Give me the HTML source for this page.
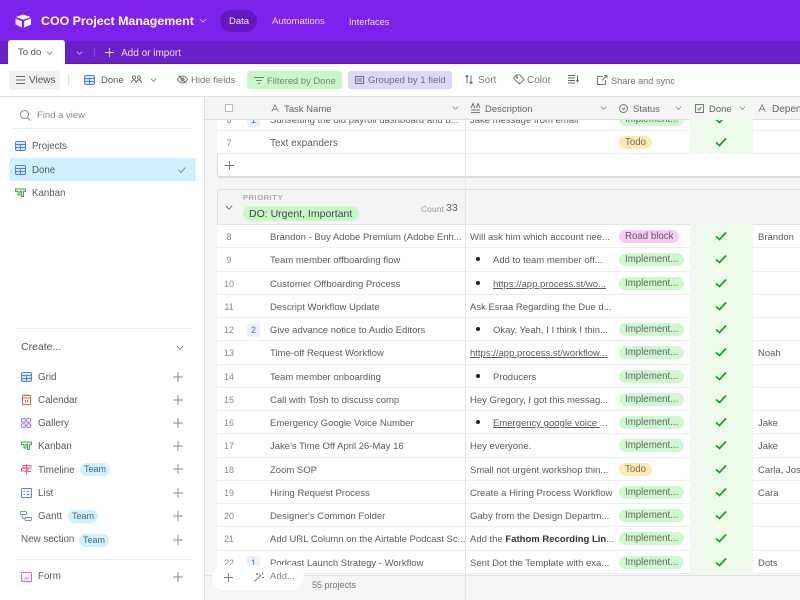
<!DOCTYPE html>
<html><head><meta charset="utf-8"><title>COO Project Management</title>
<style>
*{box-sizing:border-box}
html,body{margin:0;padding:0}
body{width:800px;height:600px;overflow:hidden;position:relative;background:#fff;font-family:"Liberation Sans",sans-serif;font-size:9.5px;color:#555;filter:blur(.3px)}
.a,.t,svg.i{position:absolute}
.t{white-space:nowrap;line-height:14px}
svg.i{fill:none;stroke:currentColor;stroke-width:1;overflow:visible}
.r{position:absolute;left:217px;width:583px;height:23.25px;background:#fff;border-bottom:1px solid #eeeeee;z-index:1}
.r>*{position:absolute}
.n{left:0;width:24px;text-align:center;top:6px;font-size:9px;color:#8a8a8a;line-height:13px}
.b{left:30px;top:5px;width:13px;height:14px;border-radius:3px;background:#ecf0fb;color:#3f6fd8;font-size:9px;text-align:center;line-height:14px}
.m{left:53px;top:6px;line-height:14px;white-space:nowrap;color:#5c5c5c}
.d{left:253px;top:6px;line-height:14px;white-space:nowrap;color:#5c5c5c}
.u{left:276px;top:6px;line-height:14px;white-space:nowrap;color:#5c5c5c}
.l{text-decoration:underline}
.o{left:259px;top:9px;width:4px;height:4px;border-radius:50%;background:#222}
.s{left:402px;top:5px;height:13px;line-height:13px;border-radius:7px;padding:0 6px;white-space:nowrap;background:#d0f8cf;color:#666;font-size:9.700px}
.s.y{background:#ffeab6;color:#7a6a50}
.s.p{background:#f9ccf3;color:#6e4f6e}
.c{left:473px;top:-1px;width:63px;height:24.250px;background:#edfbeb}
.c svg{position:absolute;left:25px;top:7px;width:12px;height:10px;fill:none;stroke:#14a01e;stroke-width:1.7}
.e{left:541px;top:6px;line-height:14px;white-space:nowrap;color:#5c5c5c}
.h{position:absolute;top:98px;height:23px;line-height:23px;color:#666;z-index:3;white-space:nowrap}
.pl{position:absolute;left:173px;width:10px;height:10px;color:#8a8a8a}
.si{position:absolute;left:38px;color:#5a5a5a;line-height:14px;white-space:nowrap;font-size:9.800px}
.tm{position:absolute;height:13px;line-height:13px;width:30px;text-align:center;border-radius:7px;background:#d0f0fd;color:#3b6d94;font-size:9px}
</style></head>
<body>
<svg width="0" height="0" style="position:absolute"><defs>
<symbol id="dn" viewBox="0 0 10 6"><path d="M1 1l4 4 4-4" fill="none" stroke="currentColor" stroke-width="1"/></symbol>
<symbol id="pl" viewBox="0 0 10 10"><path d="M5 0v10M0 5h10" fill="none" stroke="currentColor" stroke-width="1"/></symbol>
<symbol id="gr" viewBox="0 0 11 10"><rect x=".5" y=".5" width="10" height="9" rx="1.500" fill="#d8e6fb" stroke="#4c83dc"/><path d="M.5 3.500h10M.5 6.500h10M5.500 3.500v6" stroke="#4c83dc" stroke-width="1" fill="none"/></symbol>
<symbol id="kb" viewBox="0 0 11 10"><path d="M.5 1h10v2.500H8.500V8.500H6.500V3.500H5V7H3V3.500H.5z" fill="#e2f6e0" stroke="#3fae52" stroke-width="1"/></symbol>
<symbol id="aa" viewBox="0 0 10 10"><path d="M1 9.500L5 1l4 8.500M2.500 6.500h5" fill="none" stroke="currentColor" stroke-width="1"/></symbol>
</defs></svg>

<!-- top bar -->
<div class="a" style="left:0;top:0;width:800px;height:41px;background:#7c22ec"></div>
<div class="a" style="left:0;top:41px;width:800px;height:23px;background:#6a1fc9;border-bottom:1px solid #5b16b5"></div>
<svg class="a" style="left:15px;top:14px" width="17" height="14" viewBox="0 0 17 14"><path d="M8 .5L1 3l7 2.800L15.500 3z" fill="#fff"/><path d="M9 7v6.500l7-2.700V4.200z" fill="#fff"/><path d="M.5 4.500v6L7 13.500V7.200z" fill="#fff" opacity=".85"/></svg>
<div class="t" style="left:41px;top:14px;font-size:12.400px;font-weight:700;color:#fff">COO Project Management</div>
<svg class="a" style="left:199px;top:18px;color:#e8d8ff" width="8" height="5"><use href="#dn"/></svg>
<div class="a" style="left:220px;top:10px;width:37px;height:22px;border-radius:11px;background:#6418bd"></div>
<div class="t" style="left:229px;top:15px;color:#f3eaff">Data</div>
<div class="t" style="left:272px;top:15px;color:#ecdcff">Automations</div>
<div class="t" style="left:349px;top:15px;color:#ecdcff;font-size:9.200px">Interfaces</div>
<div class="a" style="left:8px;top:40px;width:57px;height:25px;background:#fff;border-radius:3px 3px 0 0"></div>
<div class="t" style="left:18px;top:46px;color:#555">To do</div>
<svg class="a" style="left:46px;top:51px;color:#666" width="7" height="4"><use href="#dn"/></svg>
<svg class="a" style="left:76px;top:51px;color:#e2d0ff" width="7" height="4"><use href="#dn"/></svg>
<div class="a" style="left:94px;top:48px;width:1px;height:9px;background:#8548d6"></div>
<svg class="a" style="left:105px;top:48px;color:#ecdcff" width="9" height="9"><use href="#pl"/></svg>
<div class="t" style="left:121px;top:47px;color:#ecdcff;font-size:10px">Add or import</div>

<!-- toolbar -->
<div class="a" style="left:0;top:65px;width:800px;height:32px;background:#fff;border-bottom:1px solid #dcdcdc"></div>
<div class="a" style="left:9px;top:71px;width:51px;height:19px;background:#f1f1f1;border-radius:2px"></div>
<svg class="i" style="left:16px;top:76px;color:#666" width="9" height="8"><path d="M0 .5h9M0 4h9M0 7.500h9"/></svg>
<div class="t" style="left:29px;top:74px;color:#555;font-size:10px">Views</div>
<div class="a" style="left:68px;top:74px;width:1px;height:12px;background:#e2e2e2"></div>
<svg class="a" style="left:84px;top:75px" width="11" height="10"><use href="#gr"/></svg>
<div class="t" style="left:101px;top:74px;color:#555">Done</div>
<svg class="i" style="left:131px;top:75px;color:#777" width="11" height="9"><circle cx="3" cy="2.500" r="1.500"/><circle cx="8" cy="2.500" r="1.500"/><path d="M.5 8c0-2 1-3 2.500-3s2 1 2 3M5.500 8c0-2 1-3 2.500-3s2.500 1 2.500 3"/></svg>
<svg class="a" style="left:150px;top:78px;color:#666" width="7" height="4"><use href="#dn"/></svg>
<svg class="i" style="left:177px;top:75px;color:#777" width="11" height="9"><path d="M.5 4.500C2 2 4 1 5.500 1s3.500 1 5 3.500C9 7 7 8 5.500 8S2 7 .5 4.500z"/><circle cx="5.500" cy="4.500" r="1.500"/><path d="M1.500.5l8 8"/></svg>
<div class="t" style="left:191px;top:74px;color:#777">Hide fields</div>
<div class="a" style="left:247px;top:71px;width:95px;height:18px;background:#c9f7c6;border-radius:3px"></div>
<svg class="i" style="left:254px;top:77px;color:#6d8c6a" width="10" height="7"><path d="M0 .5h10M2 3.500h6M4 6.500h2"/></svg>
<div class="t" style="left:267px;top:74px;color:#6f8a6d;font-size:9.400px">Filtered by Done</div>
<div class="a" style="left:348px;top:71px;width:104px;height:18px;background:#dcd6fb;border-radius:3px"></div>
<svg class="i" style="left:355px;top:76px;color:#6d6a85" width="9" height="8"><rect x=".5" y=".5" width="8" height="7"/><path d="M2 3h5M2 5h5"/></svg>
<div class="t" style="left:368px;top:74px;color:#6d6a85">Grouped by 1 field</div>
<svg class="i" style="left:465px;top:75px;color:#666" width="8" height="9"><path d="M2 8.500V.5M.5 2L2 .5 3.500 2M6 .5v8M4.500 7L6 8.500 7.500 7"/></svg>
<div class="t" style="left:478px;top:74px;color:#777;font-size:10px">Sort</div>
<svg class="i" style="left:513px;top:74px;color:#777" width="12" height="11"><path d="M1 3.500L3.500 1H7l4 4.500-4.500 4.500L1 5z"/><circle cx="4" cy="3.500" r=".7"/></svg>
<div class="t" style="left:527px;top:74px;color:#777;font-size:10px">Color</div>
<svg class="i" style="left:568px;top:75px;color:#666" width="11" height="9"><path d="M0 .5h7M0 3h7M0 5.500h7M0 8h7M9.500 .5v5M8.500 5l1 2 1-2"/></svg>
<svg class="i" style="left:597px;top:75px;color:#777" width="11" height="10"><path d="M6 1.500H.5v8h8V5M5 5.500L10 .5M7 .5h3v3"/></svg>
<div class="t" style="left:611px;top:74px;color:#777;font-size:9.200px">Share and sync</div>

<!-- sidebar -->
<div class="a" style="left:0;top:97px;width:205px;height:503px;background:#fff"></div>
<div class="a" style="left:204px;top:97px;width:1px;height:503px;background:#dddddd"></div>
<svg class="i" style="left:20px;top:110px;color:#888" width="11" height="11"><circle cx="4.500" cy="4.500" r="4"/><path d="M7.500 7.500l3 3"/></svg>
<div class="t" style="left:37px;top:109px;color:#8a8a8a">Find a view</div>
<div class="a" style="left:12px;top:128px;width:180px;height:1px;background:#eeeeee"></div>
<svg class="a" style="left:15px;top:141px" width="11" height="10"><use href="#gr"/></svg>
<div class="t" style="left:32px;top:140px;color:#5a5a5a;font-size:9.700px">Projects</div>
<div class="a" style="left:9px;top:158px;width:187px;height:23px;background:#d1f0ff;border-radius:3px 0 0 3px"></div>
<svg class="a" style="left:15px;top:165px" width="11" height="10"><use href="#gr"/></svg>
<div class="t" style="left:32px;top:164px;color:#4a5a66;font-size:9.700px">Done</div>
<svg class="i" style="left:178px;top:167px;color:#7f8d96" width="8" height="6"><path d="M.5 3l2.500 2.500L7.500.5"/></svg>
<svg class="a" style="left:15px;top:188px" width="11" height="10"><use href="#kb"/></svg>
<div class="t" style="left:32px;top:187px;color:#5a5a5a;font-size:9.700px">Kanban</div>

<div class="a" style="left:16px;top:328px;width:176px;height:1px;background:#eeeeee"></div>
<div class="t" style="left:21px;top:340px;font-size:10.500px;color:#555">Create...</div>
<svg class="a" style="left:176px;top:345px;color:#777" width="8" height="5"><use href="#dn"/></svg>

<svg class="a" style="left:21px;top:372px" width="11" height="10"><use href="#gr"/></svg>
<div class="si" style="top:371px">Grid</div>
<svg class="pl" style="top:372px"><use href="#pl"/></svg>
<svg class="i" style="left:22px;top:394px;color:#d4694f" width="9" height="11"><rect x=".5" y="1.500" width="8" height="9"/><path d="M.5 4h8M3 0v2M6 0v2M3.500 6v2.500M5.500 6v2.500"/></svg>
<div class="si" style="top:394px">Calendar</div>
<svg class="pl" style="top:395px"><use href="#pl"/></svg>
<svg class="i" style="left:21px;top:418px;color:#a26ff0" width="10" height="10"><rect x=".5" y=".5" width="3.800" height="3.800" rx="1.200"/><rect x="5.700" y=".5" width="3.800" height="3.800" rx="1.200"/><rect x=".5" y="5.700" width="3.800" height="3.800" rx="1.200"/><rect x="5.700" y="5.700" width="3.800" height="3.800" rx="1.200"/></svg>
<div class="si" style="top:417px">Gallery</div>
<svg class="pl" style="top:418px"><use href="#pl"/></svg>
<svg class="a" style="left:21px;top:441px" width="11" height="10"><use href="#kb"/></svg>
<div class="si" style="top:440px">Kanban</div>
<svg class="pl" style="top:441px"><use href="#pl"/></svg>
<svg class="i" style="left:21px;top:464px;color:#e8668e" width="11" height="11"><path d="M5.500 0v11M2 1.500h8v2.500H2zM.5 4.500H7V7H.5zM4 7.500h6"/></svg>
<div class="si" style="top:464px">Timeline</div>
<div class="tm" style="left:80px;top:463px">Team</div>
<svg class="pl" style="top:464px"><use href="#pl"/></svg>
<svg class="i" style="left:21px;top:488px;color:#6a7bc8" width="11" height="10"><rect x=".5" y=".5" width="10" height="9" rx="1"/><path d="M2.500 3.200h1.500M2.500 6.500h1.500M5.500 3.200h3M5.500 6.500h3"/></svg>
<div class="si" style="top:487px">List</div>
<svg class="pl" style="top:488px"><use href="#pl"/></svg>
<svg class="i" style="left:20px;top:511px;color:#6f9a9f" width="12" height="10"><rect x=".5" y=".5" width="6" height="3" rx="1"/><rect x="5" y="6.500" width="6.500" height="3" rx="1"/><path d="M2 3.500c0 3 1 4.500 3 4.500"/></svg>
<div class="si" style="top:510px">Gantt</div>
<div class="tm" style="left:68px;top:510px">Team</div>
<svg class="pl" style="top:511px"><use href="#pl"/></svg>
<div class="t" style="left:21px;top:533px;color:#5a5a5a;font-size:9.800px">New section</div>
<div class="tm" style="left:79px;top:534px">Team</div>
<svg class="pl" style="top:535px"><use href="#pl"/></svg>
<div class="a" style="left:16px;top:559px;width:176px;height:1px;background:#eeeeee"></div>
<svg class="i" style="left:21px;top:572px;color:#e062c8" width="11" height="10"><rect x=".5" y=".5" width="10" height="9" rx="1"/><path d="M2.500 7.500L4.500 4.500l1.500 1.500 1-1 1.500 2.500z" fill="#f4a8e6" stroke="none"/></svg>
<div class="si" style="top:570px">Form</div>
<svg class="pl" style="top:572px"><use href="#pl"/></svg>

<!-- grid -->
<div class="a" style="left:205px;top:97px;width:595px;height:503px;background:#f5f4f6"></div>

<!-- grid header -->
<div class="a" style="left:205px;top:97px;width:595px;height:23px;background:#f5f4f5;border-bottom:1px solid #dcdcdc;z-index:3"></div>
<div class="a" style="left:225px;top:104px;width:8px;height:8px;border:1px solid #bbb;background:#fff;z-index:4"></div>
<svg class="a" style="left:271px;top:104px;color:#777;z-index:4" width="8" height="8"><use href="#aa"/></svg>
<div class="h" style="left:284px">Task Name</div>
<svg class="a" style="left:452px;top:106px;color:#777;z-index:4" width="7" height="4"><use href="#dn"/></svg>
<svg class="i" style="left:471px;top:103px;color:#777;z-index:4" width="9" height="10"><path d="M0 5L2 .5 4 5M5.500 5l1.500-4.500L9 5M0 7h9M0 9.500h9"/></svg>
<div class="h" style="left:485px">Description</div>
<svg class="a" style="left:600px;top:106px;color:#777;z-index:4" width="7" height="4"><use href="#dn"/></svg>
<svg class="i" style="left:619px;top:104px;color:#777;z-index:4" width="9" height="9"><circle cx="4.500" cy="4.500" r="4"/><path d="M3 4l1.500 1.500L6 4"/></svg>
<div class="h" style="left:633px">Status</div>
<svg class="a" style="left:675px;top:106px;color:#777;z-index:4" width="7" height="4"><use href="#dn"/></svg>
<div class="a" style="left:690px;top:97px;width:63px;height:23px;background:#f2f7f1;z-index:3"></div>
<svg class="i" style="left:695px;top:104px;color:#777;z-index:4" width="9" height="9"><rect x=".5" y=".5" width="8" height="8"/><path d="M2.500 4.500l1.500 1.500 2.500-3"/></svg>
<div class="h" style="left:709px;z-index:4">Done</div>
<svg class="a" style="left:739px;top:106px;color:#777;z-index:4" width="7" height="4"><use href="#dn"/></svg>
<svg class="a" style="left:758px;top:104px;color:#777;z-index:4" width="8" height="8"><use href="#aa"/></svg>
<div class="h" style="left:772px;font-size:10px">Depen</div>

<!-- group 1 -->
<div class="a" style="left:217px;top:120px;width:583px;height:58px;background:#fff;border-left:1px solid #dcdcdc;border-bottom:2px solid #dcdcdc;border-bottom-left-radius:4px;z-index:1"></div>
<div class="r" style="top:108px;height:23px;z-index:2"><div class="n">6</div><div class="b">1</div><div class="m">Sunsetting the old payroll dashboard and b...</div><div class="d">Jake message from email</div><div class="s">Implement...</div><div class="c" style="height:24px"><svg viewBox="0 0 12 10"><path d="M1 5.500l3.500 3L11 1.500"/></svg></div></div>
<div class="r" style="top:131px;z-index:2"><div class="n">7</div><div class="m" style="font-size:10px">Text expanders</div><div class="s y">Todo</div><div class="c"><svg viewBox="0 0 12 10"><path d="M1 5.500l3.500 3L11 1.500"/></svg></div></div>
<svg class="a" style="left:225px;top:161px;color:#777;z-index:2" width="9" height="9"><use href="#pl"/></svg>

<!-- group 2 header -->
<div class="a" style="left:217px;top:189px;width:583px;height:36px;background:#f5f4f5;border-left:1px solid #dcdcdc;border-top:1px solid #dddddd;border-top-left-radius:4px;border-bottom:1px solid #e2e2e2;z-index:1"></div>
<svg class="a" style="left:225px;top:205px;color:#555;z-index:2" width="8" height="5"><use href="#dn"/></svg>
<div class="t" style="left:243px;top:191px;font-size:7.500px;letter-spacing:.6px;color:#8a8a8a;z-index:2">PRIORITY</div>
<div class="a" style="left:243px;top:206px;width:116px;height:15px;border-radius:8px;background:#c9f7c6;z-index:2"></div>
<div class="t" style="left:249px;top:207px;font-size:10.500px;color:#444;z-index:2">DO: Urgent, Important</div>
<div class="t" style="left:421px;top:202px;font-size:8.500px;color:#999;z-index:2">Count</div>
<div class="t" style="left:446px;top:201px;font-size:10.500px;color:#666;z-index:2">33</div>

<div class="r" style="top:225px"><div class="n">8</div><div class="m">Brandon - Buy Adobe Premium (Adobe Enh...</div><div class="d">Will ask him which account nee...</div><div class="s p">Road block</div><div class="c"><svg viewBox="0 0 12 10"><path d="M1 5.500l3.500 3L11 1.500"/></svg></div><div class="e">Brandon</div></div>
<div class="r" style="top:248.250px"><div class="n">9</div><div class="m">Team member offboarding flow</div><div class="o"></div><div class="u">Add to team member off...</div><div class="s">Implement...</div><div class="c"><svg viewBox="0 0 12 10"><path d="M1 5.500l3.500 3L11 1.500"/></svg></div></div>
<div class="r" style="top:271.500px"><div class="n">10</div><div class="m">Customer Offboarding Process</div><div class="o"></div><div class="u l">https://app.process.st/wo...</div><div class="s">Implement...</div><div class="c"><svg viewBox="0 0 12 10"><path d="M1 5.500l3.500 3L11 1.500"/></svg></div></div>
<div class="r" style="top:294.750px"><div class="n">11</div><div class="m">Descript Workflow Update</div><div class="d">Ask Esraa Regarding the Due d...</div><div class="c"><svg viewBox="0 0 12 10"><path d="M1 5.500l3.500 3L11 1.500"/></svg></div></div>
<div class="r" style="top:318px"><div class="n">12</div><div class="b">2</div><div class="m">Give advance notice to Audio Editors</div><div class="o"></div><div class="u">Okay. Yeah, I I think I thin...</div><div class="s">Implement...</div><div class="c"><svg viewBox="0 0 12 10"><path d="M1 5.500l3.500 3L11 1.500"/></svg></div></div>
<div class="r" style="top:341.250px"><div class="n">13</div><div class="m">Time-off Request Workflow</div><div class="d l">https://app.process.st/workflow...</div><div class="s">Implement...</div><div class="c"><svg viewBox="0 0 12 10"><path d="M1 5.500l3.500 3L11 1.500"/></svg></div><div class="e">Noah</div></div>
<div class="r" style="top:364.500px"><div class="n">14</div><div class="m">Team member onboarding</div><div class="o"></div><div class="u">Producers</div><div class="s">Implement...</div><div class="c"><svg viewBox="0 0 12 10"><path d="M1 5.500l3.500 3L11 1.500"/></svg></div></div>
<div class="r" style="top:387.750px"><div class="n">15</div><div class="m">Call with Tosh to discuss comp</div><div class="d">Hey Gregory, I got this messag...</div><div class="s">Implement...</div><div class="c"><svg viewBox="0 0 12 10"><path d="M1 5.500l3.500 3L11 1.500"/></svg></div></div>
<div class="r" style="top:411px"><div class="n">16</div><div class="m">Emergency Google Voice Number</div><div class="o"></div><div class="u"><span class="l">Emergency google voice </span>...</div><div class="s">Implement...</div><div class="c"><svg viewBox="0 0 12 10"><path d="M1 5.500l3.500 3L11 1.500"/></svg></div><div class="e">Jake</div></div>
<div class="r" style="top:434.250px"><div class="n">17</div><div class="m">Jake's Time Off April 26-May 16</div><div class="d">Hey everyone.</div><div class="s">Implement...</div><div class="c"><svg viewBox="0 0 12 10"><path d="M1 5.500l3.500 3L11 1.500"/></svg></div><div class="e">Jake</div></div>
<div class="r" style="top:457.500px"><div class="n">18</div><div class="m">Zoom SOP</div><div class="d">Small not urgent workshop thin...</div><div class="s y">Todo</div><div class="c"><svg viewBox="0 0 12 10"><path d="M1 5.500l3.500 3L11 1.500"/></svg></div><div class="e">Carla, Josh</div></div>
<div class="r" style="top:480.750px"><div class="n">19</div><div class="m">Hiring Request Process</div><div class="d">Create a Hiring Process Workflow</div><div class="s">Implement...</div><div class="c"><svg viewBox="0 0 12 10"><path d="M1 5.500l3.500 3L11 1.500"/></svg></div><div class="e">Cara</div></div>
<div class="r" style="top:504px"><div class="n">20</div><div class="m">Designer's Common Folder</div><div class="d">Gaby from the Design Departm...</div><div class="s">Implement...</div><div class="c"><svg viewBox="0 0 12 10"><path d="M1 5.500l3.500 3L11 1.500"/></svg></div></div>
<div class="r" style="top:527.250px"><div class="n">21</div><div class="m">Add URL Column on the Airtable Podcast Sc...</div><div class="d">Add the <b style="color:#333">Fathom Recording Lin</b>...</div><div class="s">Implement...</div><div class="c"><svg viewBox="0 0 12 10"><path d="M1 5.500l3.500 3L11 1.500"/></svg></div></div>
<div class="r" style="top:550.500px"><div class="n">22</div><div class="b">1</div><div class="m">Podcast Launch Strategy - Workflow</div><div class="d">Sent Dot the Template with exa...</div><div class="s">Implement...</div><div class="c"><svg viewBox="0 0 12 10"><path d="M1 5.500l3.500 3L11 1.500"/></svg></div><div class="e">Dots</div></div>

<!-- footer -->
<div class="a" style="left:205px;top:575px;width:595px;height:25px;background:#f5f4f6;border-top:1px solid #e2e2e2;z-index:2"></div>

<!-- frozen column divider -->
<div class="a" style="left:465px;top:97px;width:1px;height:503px;background:#e4e4e4;z-index:2"></div>

<div class="a" style="left:212px;top:565px;width:92px;height:25px;background:#fff;border-radius:12px;z-index:3"></div>
<svg class="a" style="left:224px;top:573px;color:#777;z-index:4" width="9" height="9"><use href="#pl"/></svg>
<svg class="i" style="left:254px;top:572px;color:#777;z-index:4" width="10" height="10"><path d="M.5 9.500L7 3M5.500 1.500l.5 1M8.500 .5v2M8 5.500h2M2 2h2M3 1v2"/></svg>
<div class="t" style="left:270px;top:570px;color:#888;z-index:4">Add...</div>
<div class="t" style="left:312px;top:578px;font-size:9px;color:#777;z-index:4">55 projects</div>
</body></html>
